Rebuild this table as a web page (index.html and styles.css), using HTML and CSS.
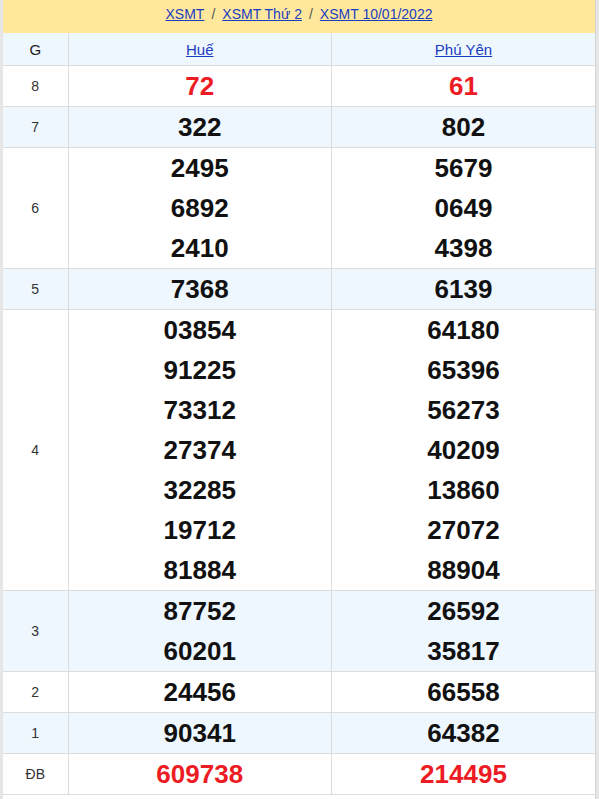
FILE: index.html
```html
<!DOCTYPE html>
<html>
<head>
<meta charset="utf-8">
<link rel="stylesheet" href="styles.css">
</head>
<body>
<div class="page">
  <div class="crumbs">
    <a href="#">XSMT</a><span class="sep">/</span><a href="#">XSMT Thứ 2</a><span class="sep">/</span><a href="#">XSMT 10/01/2022</a>
  </div>
  <table class="kq">
    <colgroup><col class="c-g"><col class="c-p"><col class="c-p"></colgroup>
    <tr class="alt head"><td class="g">G</td><td><a href="#">Huế</a></td><td><a href="#">Phú Yên</a></td></tr>
    <tr><td class="g">8</td><td class="num red">72</td><td class="num red">61</td></tr>
    <tr class="alt"><td class="g">7</td><td class="num">322</td><td class="num">802</td></tr>
    <tr><td class="g">6</td><td class="num"><div>2495</div><div>6892</div><div>2410</div></td><td class="num"><div>5679</div><div>0649</div><div>4398</div></td></tr>
    <tr class="alt"><td class="g">5</td><td class="num">7368</td><td class="num">6139</td></tr>
    <tr><td class="g">4</td><td class="num"><div>03854</div><div>91225</div><div>73312</div><div>27374</div><div>32285</div><div>19712</div><div>81884</div></td><td class="num"><div>64180</div><div>65396</div><div>56273</div><div>40209</div><div>13860</div><div>27072</div><div>88904</div></td></tr>
    <tr class="alt"><td class="g">3</td><td class="num"><div>87752</div><div>60201</div></td><td class="num"><div>26592</div><div>35817</div></td></tr>
    <tr><td class="g">2</td><td class="num">24456</td><td class="num">66558</td></tr>
    <tr class="alt"><td class="g">1</td><td class="num">90341</td><td class="num">64382</td></tr>
    <tr><td class="g">ĐB</td><td class="num red">609738</td><td class="num red">214495</td></tr>
  </table>
  <div class="after"></div>
</div>
</body>
</html>
```
FILE: styles.css
```css
html, body {
  margin: 0;
  padding: 0;
}
body {
  background: #e6e6e6;
  font-family: "Liberation Sans", Arial, sans-serif;
}
.page {
  width: 592px;
  margin-left: 3px;
  background: #fff;
  min-height: 799px;
  border-right: 1px solid #d4d4d4;
}
.crumbs {
  background: #ffe89b;
  height: 33px;
  box-sizing: border-box;
  padding-top: 6px;
  text-align: center;
  font-size: 14px;
  line-height: 17px;
  color: #666;
}
.crumbs a {
  color: #1a3cc0;
  text-decoration: underline;
}
.crumbs .sep {
  margin: 0 7px;
  color: #555;
}
.kq {
  width: 592px;
  border-collapse: collapse;
  table-layout: fixed;
}
.c-g { width: 65px; }
.kq td {
  border: 1px solid #dcdcdc;
  text-align: center;
  padding: 0;
  vertical-align: middle;
}
.kq tr td:first-child { border-left: none; }
.kq tr td:last-child { border-right: none; }
.kq tr:first-child td { border-top: none; }
.alt td { background: #eef6fe; }
.head td {
  height: 32px;
  font-size: 15px;
  color: #222;
}
.head a {
  color: #1a3cc0;
  text-decoration: underline;
}
.g {
  font-size: 14px;
  color: #333;
}
.head .g {
  font-size: 15px;
}
.num {
  font-size: 26px;
  font-weight: bold;
  color: #111;
  line-height: 40px;
}
.num.red {
  color: #ed1c24;
}
.after {
  height: 4px;
}
```
